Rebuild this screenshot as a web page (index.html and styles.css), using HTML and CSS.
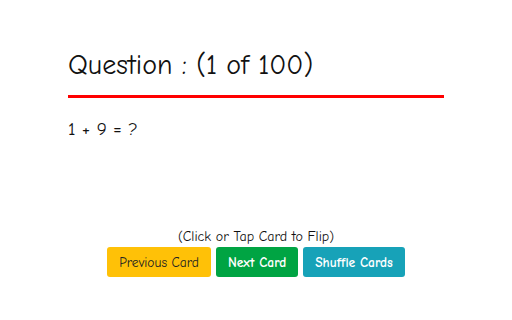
FILE: index.html
```html
<!DOCTYPE html>
<html lang="en">
<head>
    <meta charset="UTF-8">
    <meta name="viewport" content="width=device-width, initial-scale=1.0">
    <title>Flash Cards</title>
    <link rel="stylesheet" href="styles.css">
</head>
<body>
    <div class="card">
      <h2 class="question">Question : (1 of 100)</h2>
      <div class="front">1 + 9 = ?</div>
    </div>
    <div class="controls">
      <div class="hint">(Click or Tap Card to Flip)</div>
      <div class="buttons">
        <button class="btn prev">Previous Card</button>
        <button class="btn next">Next Card</button>
        <button class="btn shuffle">Shuffle Cards</button>
      </div>
    </div>
</body>
</html>
```

FILE: styles.css
```css
* {
    margin: 0;
    padding: 0;
    box-sizing: border-box;
}
body {
    width: 512px;
    height: 320px;
    font-family: "Comic Sans MS", "Comic Neue", cursive;
    color: #111;
    background: #fff;
}
.card {
    width: 376px;
    margin: 0 auto;
    padding-top: 48px;
    height: 228px;
}
.question {
    font-size: 28px;
    font-weight: normal;
    line-height: 34px;
    padding-bottom: 13px;
    border-bottom: 3px solid #f00;
}
.front {
    font-size: 19px;
    margin-top: 20px;
}
.controls {
    text-align: center;
}
.hint {
    font-size: 14px;
    line-height: 18px;
}
.buttons {
    display: flex;
    justify-content: center;
    gap: 5px;
    margin-top: 1px;
}
.btn {
    font-family: inherit;
    font-size: 13.5px;
    height: 30px;
    padding: 0 12px;
    border: none;
    border-radius: 3px;
    color: #fff;
    font-weight: bold;
}
.prev {
    background: #ffc107;
    color: #222;
    font-weight: normal;
}
.next {
    background: #00a443;
}
.shuffle {
    background: #17a2b8;
}
```
